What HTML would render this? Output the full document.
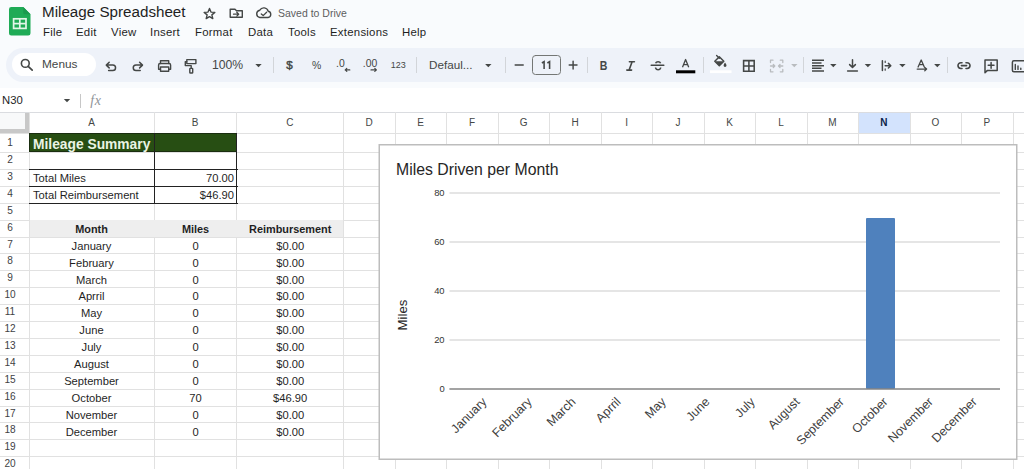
<!DOCTYPE html>
<html><head><meta charset="utf-8">
<style>
*{box-sizing:border-box;margin:0;padding:0}
html,body{width:1024px;height:469px;overflow:hidden;background:#fff;font-family:"Liberation Sans",sans-serif;position:relative}
.a{position:absolute;white-space:nowrap}
#top{position:absolute;left:0;top:0;width:1024px;height:88px;background:#f9fbfd}
.menu{font-size:11.4px;color:#1f1f1f;top:25px;line-height:14px;letter-spacing:0.25px}
.tb{position:absolute;left:6px;top:47.6px;width:1040px;height:34.4px;background:#eef2f9;border-radius:17px}
.sep{position:absolute;top:57px;width:1px;height:16px;background:#d2d5d9}
.ic{position:absolute}
.hl{position:absolute;height:1px;background:#e1e1e1}
.vl{position:absolute;width:1px;background:#e1e1e1}
.ch{position:absolute;top:113px;height:20px;font-size:10px;color:#444746;text-align:center;line-height:20px}
.rh{position:absolute;left:0;width:20px;font-size:10.1px;color:#3f4245;text-align:center;line-height:17px;height:17px}
.c{position:absolute;font-size:11.2px;color:#1f1f1f;line-height:17px;height:17px;white-space:nowrap}
</style></head><body>
<div id="top"></div>
<!-- logo -->
<svg class="ic" style="left:8.5px;top:6.8px" width="22" height="29" viewBox="0 0 22 29">
<path d="M2.3 0 H14.3 L21.5 7.2 V26.2 a2.3 2.3 0 0 1 -2.3 2.3 H2.3 a2.3 2.3 0 0 1 -2.3 -2.3 V2.3 a2.3 2.3 0 0 1 2.3 -2.3z" fill="#1fab56"/>
<path d="M14.3 0 L21.5 7.2 H15.8 a1.5 1.5 0 0 1 -1.5 -1.5z" fill="#1a9a4e"/>
<rect x="4.6" y="11.8" width="12.4" height="9.6" fill="none" stroke="#e3f6e8" stroke-width="1.7"/>
<line x1="4.6" y1="16.6" x2="17" y2="16.6" stroke="#e3f6e8" stroke-width="1.7"/>
<line x1="10.8" y1="11.8" x2="10.8" y2="21.4" stroke="#e3f6e8" stroke-width="1.7"/>
</svg>
<div class="a" style="left:42px;top:2px;font-size:15.2px;color:#1f1f1f;line-height:20px">Mileage Spreadsheet</div>
<div class="a menu" style="left:43px">File</div>
<div class="a menu" style="left:76px">Edit</div>
<div class="a menu" style="left:111px">View</div>
<div class="a menu" style="left:150px">Insert</div>
<div class="a menu" style="left:195px">Format</div>
<div class="a menu" style="left:248px">Data</div>
<div class="a menu" style="left:288px">Tools</div>
<div class="a menu" style="left:330px">Extensions</div>
<div class="a menu" style="left:402px">Help</div>
<div class="a" style="left:278px;top:6px;font-size:10.5px;color:#5e5e5e;line-height:14px">Saved to Drive</div>

<div class="tb"></div>
<div class="a" style="left:12px;top:53px;width:84px;height:23px;background:#fff;border-radius:12px"></div>
<div class="a" style="left:42px;top:57px;font-size:11.8px;color:#444746;line-height:14px">Menus</div>
<div class="a" style="left:212px;top:58px;font-size:12.2px;color:#444746;line-height:14px">100%</div>
<div class="a" style="left:429px;top:58px;font-size:11.7px;color:#444746;line-height:14px">Defaul...</div>
<div class="sep" style="left:273px"></div>
<div class="sep" style="left:416px"></div>
<div class="sep" style="left:505px"></div>
<div class="sep" style="left:587px"></div>
<div class="sep" style="left:703px"></div>
<div class="sep" style="left:803px"></div>
<div class="sep" style="left:947px"></div>

<!-- formula bar -->
<div class="a" style="left:2px;top:93px;font-size:11.3px;color:#1f1f1f;line-height:14px">N30</div>
<div class="a" style="left:80px;top:94px;width:1px;height:14px;background:#c7c7c7"></div>
<div class="hl" style="left:0;top:112px;width:1024px;background:#dadce0"></div>

<!--ICONS-->
<svg class="ic" style="left:0;top:0" width="1024" height="112" viewBox="0 0 1024 112" fill="none" stroke="#444746" stroke-width="1.5" stroke-linecap="round" stroke-linejoin="round" font-family="Liberation Sans, sans-serif">
<polygon points="209.50,8.50 210.97,12.08 214.83,12.37 211.88,14.87 212.79,18.63 209.50,16.60 206.21,18.63 207.12,14.87 204.17,12.37 208.03,12.08" stroke="#444746" stroke-width="1.4"/>
<path d="M230.2 9.3 H235 L236.5 10.8 H242.3 V17.3 H230.2 Z" stroke-width="1.4"/>
<path d="M233.5 14.2 H238.5 M236.8 12.3 L238.7 14.2 L236.8 16.1" stroke-width="1.3"/>
<path d="M259.8 17.5 H268 A3.2 3.2 0 0 0 268.2 11.2 A4.6 4.6 0 0 0 259.8 10.2 A3.7 3.7 0 0 0 259.8 17.5 Z" stroke-width="1.4"/>
<path d="M261.3 13.9 L263.2 15.6 L266.6 12.2" stroke-width="1.3"/>
<circle cx="25.3" cy="63.4" r="3.9" stroke-width="1.6"/><path d="M28.2 66.3 L32.2 70.2" stroke-width="1.7"/>
<path d="M109.2 62.3 L106.3 65.1 L109.2 67.9 M106.6 65.1 H112.8 A2.75 2.75 0 0 1 112.8 70.6 H108.6" stroke-width="1.5"/>
<path d="M139.6 62.3 L142.5 65.1 L139.6 67.9 M142.2 65.1 H136 A2.75 2.75 0 0 0 136 70.6 H140.2" stroke-width="1.5"/>
<path d="M160.5 63.5 V60.8 H168.7 V63.5" stroke-width="1.4"/>
<path d="M160.5 69.3 H158.6 V65 A1.5 1.5 0 0 1 160.1 63.5 H169.1 A1.5 1.5 0 0 1 170.6 65 V69.3 H168.7" stroke-width="1.4"/>
<path d="M160.5 67 H168.7 V71.3 H160.5 Z" stroke-width="1.4"/>
<path d="M186.8 59.6 H195.9 V63.6 H186.8 Z" stroke-width="1.4"/>
<path d="M186.8 61.6 H185.3 V65.6 H191.2 V68.3" stroke-width="1.4"/>
<rect x="189.8" y="68.4" width="2.9" height="4.6" rx="0.6" stroke-width="1.4"/>
<path d="M255.3 64 H261.7 L258.5 67.2 Z" fill="#444746" stroke="none"/>
<path d="M485.1 64 H491.5 L488.3 67.2 Z" fill="#444746" stroke="none"/>
<path d="M791.0999999999999 64 H797.5 L794.3 67.2 Z" fill="#b9bcbf" stroke="none"/>
<path d="M830.0999999999999 64 H836.5 L833.3 67.2 Z" fill="#444746" stroke="none"/>
<path d="M864.6999999999999 64 H871.1 L867.9 67.2 Z" fill="#444746" stroke="none"/>
<path d="M899.1999999999999 64 H905.6 L902.4 67.2 Z" fill="#444746" stroke="none"/>
<path d="M934.0999999999999 64 H940.5 L937.3 67.2 Z" fill="#444746" stroke="none"/>
<text x="289.6" y="69.2" font-size="11.6" text-anchor="middle" fill="#444746" stroke="#444746" stroke-width="0.45">$</text>
<text x="316.7" y="68.6" font-size="10.4" text-anchor="middle" fill="#444746" stroke="none">%</text>
<text x="336" y="67.3" font-size="10.4" fill="#444746" stroke="none">.0</text>
<path d="M349.8 69.9 H345.2 M346.8 68.4 L345.2 69.9 L346.8 71.4" stroke-width="1.2"/>
<text x="362.8" y="67.3" font-size="10.4" fill="#444746" stroke="none">.00</text>
<path d="M371 69.9 H376.4 M374.8 68.4 L376.4 69.9 L374.8 71.4" stroke-width="1.2"/>
<text x="398.3" y="68.1" font-size="9" text-anchor="middle" fill="#444746" stroke="none">123</text>
<path d="M515.2 64.9 H523.2" stroke-width="1.45"/>
<rect x="532.5" y="55.5" width="28" height="19" rx="3" stroke="#747775" stroke-width="1"/>
<path d="M541.9 63 L544.1 61.6 V69 M547.4 63 L549.6 61.6 V69" stroke-width="1.55" stroke-linecap="butt" stroke-linejoin="miter"/>
<path d="M569.2 65 H577 M573.1 61.1 V68.9" stroke-width="1.45"/>
<text transform="translate(603.6 69.9) scale(0.82 1)" font-size="12.9" font-weight="bold" text-anchor="middle" fill="#444746" stroke="none">B</text>
<path d="M629.4 61.7 H634.4 M626.8 70.1 H631.6 M632.1 61.7 L629.1 70.1" stroke-width="1.6"/>
<path d="M651.2 65.2 H663.8" stroke-width="1.5"/>
<path d="M655.6 63.3 A2.6 2.1 0 0 1 660.6 63.3 M655.6 67.6 V68 A2.6 2.5 0 0 0 660.6 68 V67.6" stroke-width="1.5" stroke-linecap="butt"/>
<path d="M682.5 67.3 L685.6 59.5 L688.7 67.3 M683.6 64.6 H687.6" stroke-width="1.3" stroke-linecap="butt"/>
<rect x="676" y="70.3" width="19.3" height="3" fill="#000" stroke="none"/>
<path d="M714.8 61.3 L719.3 56.8 L723.8 61.3 L719.3 65.8 Z" fill="none" stroke-width="1.5"/>
<path d="M714.8 61.3 H723.8 L719.3 65.8 Z" fill="#444746" stroke="none"/>
<path d="M716.6 55.6 L719.3 58.3" stroke-width="1.4"/>
<path d="M725 62.6 Q723.5 64.8 723.6 65.6 A1.45 1.45 0 0 0 726.5 65.6 Q726.6 64.8 725 62.6 Z" fill="#444746" stroke="none"/>
<rect x="710" y="70.3" width="21.5" height="2.8" fill="#fff" stroke="none"/>
<path d="M743.6 60.6 H754.2 V71.2 H743.6 Z M748.9 60.6 V71.2 M743.6 65.9 H754.2" stroke-width="1.55" stroke-linecap="butt" stroke-linejoin="miter"/>
<path d="M770.5 62.5 V60.2 H773 M770.5 69.5 V71.8 H773 M782.8 62.5 V60.2 H780.3 M782.8 69.5 V71.8 H780.3 M770.5 66 H774.8 M773.3 64.5 L774.8 66 L773.3 67.5 M782.8 66 H778.5 M780 64.5 L778.5 66 L780 67.5" stroke="#b9bcbf" stroke-width="1.3"/>
<path d="M812 60.3 H824 M812 63 H821.5 M812 65.7 H824 M812 68.3 H821.5 M812 71 H824" stroke-width="1.4" stroke-linecap="butt"/>
<path d="M847.6 70.9 H857.4 M852.5 59.8 V67.2 M849.6 64.6 L852.5 67.5 L855.4 64.6" stroke-width="1.5"/>
<path d="M882.4 60.8 V70.6 M885.2 65.7 H890.6 M888.4 63.4 L890.8 65.7 L888.4 68" stroke-width="1.5"/>
<path d="M885.2 61.2 V62.5 M885.2 68.9 V70.2" stroke-width="1.2"/>
<path d="M918.1 67 L921.2 60 L924.3 67 M919.1 64.7 H923.3 M917.2 69.1 H926.5 M924.8 67.5 L926.6 69.1 L924.8 70.7" stroke-width="1.3"/>
<path d="M962 62.7 H960.9 A2.9 2.9 0 0 0 960.9 68.5 H962 M966 62.7 H967.1 A2.9 2.9 0 0 1 967.1 68.5 H966 M961.4 65.6 H966.6" stroke-width="1.6"/>
<path d="M985 60 H997.2 V70.6 H987.2 L985 72.8 Z" stroke-width="1.5"/>
<path d="M991.1 62.4 V68.2 M988.2 65.3 H994" stroke-width="1.5"/>
<rect x="1012.4" y="60.8" width="13" height="11" rx="1.5" stroke-width="1.5"/>
<path d="M1015.3 64.5 V69.4 M1018 66 V69.4 M1020.8 68.3 V69.4" stroke-width="1.4"/>
<text x="90.2" y="105" font-size="14" letter-spacing="0.6" font-family="Liberation Serif, serif" font-style="italic" fill="#8f9398" stroke="none">fx</text>
<path d="M63.8 99 H70.2 L67 102.2 Z" fill="#444746" stroke="none"/>
</svg>
<!--/ICONS-->
<!--GRID-->
<div class="hl" style="left:0;top:133px;width:1024px;background:#e1e1e1"></div>
<div class="a" style="left:859.20px;top:113px;width:50.48px;height:20px;background:#d3e3fd"></div>
<div class="ch" style="left:29.00px;width:125.00px;">A</div>
<div class="ch" style="left:154.00px;width:82.30px;">B</div>
<div class="ch" style="left:236.30px;width:107.10px;">C</div>
<div class="ch" style="left:343.40px;width:51.48px;">D</div>
<div class="ch" style="left:394.88px;width:51.48px;">E</div>
<div class="ch" style="left:446.36px;width:51.48px;">F</div>
<div class="ch" style="left:497.84px;width:51.48px;">G</div>
<div class="ch" style="left:549.32px;width:51.48px;">H</div>
<div class="ch" style="left:600.80px;width:51.48px;">I</div>
<div class="ch" style="left:652.28px;width:51.48px;">J</div>
<div class="ch" style="left:703.76px;width:51.48px;">K</div>
<div class="ch" style="left:755.24px;width:51.48px;">L</div>
<div class="ch" style="left:806.72px;width:51.48px;">M</div>
<div class="ch" style="left:858.20px;width:51.48px;font-weight:bold;color:#0b1f4a">N</div>
<div class="ch" style="left:909.68px;width:51.48px;">O</div>
<div class="ch" style="left:961.16px;width:51.48px;">P</div>
<div class="ch" style="left:1012.64px;width:51.48px;">Q</div>
<div class="vl" style="left:29.00px;top:112px;height:360px;background:#e1e1e1"></div>
<div class="vl" style="left:154.00px;top:112px;height:360px;background:#e1e1e1"></div>
<div class="vl" style="left:236.30px;top:112px;height:360px;background:#e1e1e1"></div>
<div class="vl" style="left:343.40px;top:112px;height:360px;background:#e1e1e1"></div>
<div class="vl" style="left:394.88px;top:112px;height:360px;background:#e1e1e1"></div>
<div class="vl" style="left:446.36px;top:112px;height:360px;background:#e1e1e1"></div>
<div class="vl" style="left:497.84px;top:112px;height:360px;background:#e1e1e1"></div>
<div class="vl" style="left:549.32px;top:112px;height:360px;background:#e1e1e1"></div>
<div class="vl" style="left:600.80px;top:112px;height:360px;background:#e1e1e1"></div>
<div class="vl" style="left:652.28px;top:112px;height:360px;background:#e1e1e1"></div>
<div class="vl" style="left:703.76px;top:112px;height:360px;background:#e1e1e1"></div>
<div class="vl" style="left:755.24px;top:112px;height:360px;background:#e1e1e1"></div>
<div class="vl" style="left:806.72px;top:112px;height:360px;background:#e1e1e1"></div>
<div class="vl" style="left:858.20px;top:112px;height:360px;background:#e1e1e1"></div>
<div class="vl" style="left:909.68px;top:112px;height:360px;background:#e1e1e1"></div>
<div class="vl" style="left:961.16px;top:112px;height:360px;background:#e1e1e1"></div>
<div class="vl" style="left:1012.64px;top:112px;height:360px;background:#e1e1e1"></div>
<div class="vl" style="left:1064.12px;top:112px;height:360px;background:#e1e1e1"></div>
<div class="hl" style="left:0;top:152.00px;width:1024px;background:#e1e1e1"></div>
<div class="rh" style="top:133.00px;height:19.00px;line-height:19.00px">1</div>
<div class="hl" style="left:0;top:168.90px;width:1024px;background:#e1e1e1"></div>
<div class="rh" style="top:152.00px;height:16.90px;line-height:16.90px">2</div>
<div class="hl" style="left:0;top:185.80px;width:1024px;background:#e1e1e1"></div>
<div class="rh" style="top:168.90px;height:16.90px;line-height:16.90px">3</div>
<div class="hl" style="left:0;top:202.70px;width:1024px;background:#e1e1e1"></div>
<div class="rh" style="top:185.80px;height:16.90px;line-height:16.90px">4</div>
<div class="hl" style="left:0;top:219.60px;width:1024px;background:#e1e1e1"></div>
<div class="rh" style="top:202.70px;height:16.90px;line-height:16.90px">5</div>
<div class="hl" style="left:0;top:236.50px;width:1024px;background:#e1e1e1"></div>
<div class="rh" style="top:219.60px;height:16.90px;line-height:16.90px">6</div>
<div class="hl" style="left:0;top:253.40px;width:1024px;background:#e1e1e1"></div>
<div class="rh" style="top:236.50px;height:16.90px;line-height:16.90px">7</div>
<div class="hl" style="left:0;top:270.30px;width:1024px;background:#e1e1e1"></div>
<div class="rh" style="top:253.40px;height:16.90px;line-height:16.90px">8</div>
<div class="hl" style="left:0;top:287.20px;width:1024px;background:#e1e1e1"></div>
<div class="rh" style="top:270.30px;height:16.90px;line-height:16.90px">9</div>
<div class="hl" style="left:0;top:304.10px;width:1024px;background:#e1e1e1"></div>
<div class="rh" style="top:287.20px;height:16.90px;line-height:16.90px">10</div>
<div class="hl" style="left:0;top:321.00px;width:1024px;background:#e1e1e1"></div>
<div class="rh" style="top:304.10px;height:16.90px;line-height:16.90px">11</div>
<div class="hl" style="left:0;top:337.90px;width:1024px;background:#e1e1e1"></div>
<div class="rh" style="top:321.00px;height:16.90px;line-height:16.90px">12</div>
<div class="hl" style="left:0;top:354.80px;width:1024px;background:#e1e1e1"></div>
<div class="rh" style="top:337.90px;height:16.90px;line-height:16.90px">13</div>
<div class="hl" style="left:0;top:371.70px;width:1024px;background:#e1e1e1"></div>
<div class="rh" style="top:354.80px;height:16.90px;line-height:16.90px">14</div>
<div class="hl" style="left:0;top:388.60px;width:1024px;background:#e1e1e1"></div>
<div class="rh" style="top:371.70px;height:16.90px;line-height:16.90px">15</div>
<div class="hl" style="left:0;top:405.50px;width:1024px;background:#e1e1e1"></div>
<div class="rh" style="top:388.60px;height:16.90px;line-height:16.90px">16</div>
<div class="hl" style="left:0;top:422.40px;width:1024px;background:#e1e1e1"></div>
<div class="rh" style="top:405.50px;height:16.90px;line-height:16.90px">17</div>
<div class="hl" style="left:0;top:439.30px;width:1024px;background:#e1e1e1"></div>
<div class="rh" style="top:422.40px;height:16.90px;line-height:16.90px">18</div>
<div class="hl" style="left:0;top:456.20px;width:1024px;background:#e1e1e1"></div>
<div class="rh" style="top:439.30px;height:16.90px;line-height:16.90px">19</div>
<div class="hl" style="left:0;top:473.10px;width:1024px;background:#e1e1e1"></div>
<div class="rh" style="top:456.20px;height:16.90px;line-height:16.90px">20</div>
<div class="a" style="left:0;top:113px;width:25px;height:16px;background:#f8f9fa"></div>
<div class="a" style="left:25px;top:113px;width:4px;height:20px;background:#c8c8c8"></div>
<div class="a" style="left:0;top:129px;width:29px;height:4px;background:#c8c8c8"></div>
<div class="a" style="left:29px;top:133px;width:208px;height:19px;background:#274e13;border:1px solid #1a2e10"></div>
<div class="c" style="left:33px;top:135px;height:19px;line-height:19px;font-size:13.8px;font-weight:bold;color:#eaf4e4">Mileage Summary</div>
<div class="a" style="left:29px;top:168.90px;width:209px;height:1px;background:#222"></div>
<div class="a" style="left:29px;top:185.80px;width:209px;height:1px;background:#222"></div>
<div class="a" style="left:29px;top:202.70px;width:209px;height:1px;background:#222"></div>
<div class="a" style="left:154px;top:133px;width:1px;height:69.70px;background:#222"></div>
<div class="a" style="left:236px;top:133px;width:1px;height:69.70px;background:#222"></div>
<div class="c" style="left:33px;top:168.12px;height:20px;line-height:20px;font-size:11.2px;">Total Miles</div>
<div class="c" style="left:154px;width:80px;text-align:right;top:168.12px;height:20px;line-height:20px;font-size:11.2px;">70.00</div>
<div class="c" style="left:33px;top:185.02px;height:20px;line-height:20px;font-size:11.2px;">Total Reimbursement</div>
<div class="c" style="left:154px;width:80px;text-align:right;top:185.02px;height:20px;line-height:20px;font-size:11.2px;">$46.90</div>
<div class="a" style="left:30px;top:219.60px;width:313px;height:17.50px;background:#eeeeee"></div>
<div class="c" style="left:29px;width:125px;text-align:center;top:218.92px;height:20px;line-height:20px;font-size:10.9px;font-weight:bold">Month</div>
<div class="c" style="left:154px;width:83px;text-align:center;top:218.92px;height:20px;line-height:20px;font-size:10.9px;font-weight:bold">Miles</div>
<div class="c" style="left:237px;width:106.39999999999998px;text-align:center;top:218.92px;height:20px;line-height:20px;font-size:10.9px;font-weight:bold">Reimbursement</div>
<div class="c" style="left:29px;width:125px;text-align:center;top:235.72px;height:20px;line-height:20px;font-size:11.2px;">January</div>
<div class="c" style="left:154px;width:83px;text-align:center;top:235.72px;height:20px;line-height:20px;font-size:11.2px;">0</div>
<div class="c" style="left:237px;width:106.39999999999998px;text-align:center;top:235.72px;height:20px;line-height:20px;font-size:11.2px;">$0.00</div>
<div class="c" style="left:29px;width:125px;text-align:center;top:252.62px;height:20px;line-height:20px;font-size:11.2px;">February</div>
<div class="c" style="left:154px;width:83px;text-align:center;top:252.62px;height:20px;line-height:20px;font-size:11.2px;">0</div>
<div class="c" style="left:237px;width:106.39999999999998px;text-align:center;top:252.62px;height:20px;line-height:20px;font-size:11.2px;">$0.00</div>
<div class="c" style="left:29px;width:125px;text-align:center;top:269.52px;height:20px;line-height:20px;font-size:11.2px;">March</div>
<div class="c" style="left:154px;width:83px;text-align:center;top:269.52px;height:20px;line-height:20px;font-size:11.2px;">0</div>
<div class="c" style="left:237px;width:106.39999999999998px;text-align:center;top:269.52px;height:20px;line-height:20px;font-size:11.2px;">$0.00</div>
<div class="c" style="left:29px;width:125px;text-align:center;top:286.42px;height:20px;line-height:20px;font-size:11.2px;">Aprril</div>
<div class="c" style="left:154px;width:83px;text-align:center;top:286.42px;height:20px;line-height:20px;font-size:11.2px;">0</div>
<div class="c" style="left:237px;width:106.39999999999998px;text-align:center;top:286.42px;height:20px;line-height:20px;font-size:11.2px;">$0.00</div>
<div class="c" style="left:29px;width:125px;text-align:center;top:303.32px;height:20px;line-height:20px;font-size:11.2px;">May</div>
<div class="c" style="left:154px;width:83px;text-align:center;top:303.32px;height:20px;line-height:20px;font-size:11.2px;">0</div>
<div class="c" style="left:237px;width:106.39999999999998px;text-align:center;top:303.32px;height:20px;line-height:20px;font-size:11.2px;">$0.00</div>
<div class="c" style="left:29px;width:125px;text-align:center;top:320.22px;height:20px;line-height:20px;font-size:11.2px;">June</div>
<div class="c" style="left:154px;width:83px;text-align:center;top:320.22px;height:20px;line-height:20px;font-size:11.2px;">0</div>
<div class="c" style="left:237px;width:106.39999999999998px;text-align:center;top:320.22px;height:20px;line-height:20px;font-size:11.2px;">$0.00</div>
<div class="c" style="left:29px;width:125px;text-align:center;top:337.12px;height:20px;line-height:20px;font-size:11.2px;">July</div>
<div class="c" style="left:154px;width:83px;text-align:center;top:337.12px;height:20px;line-height:20px;font-size:11.2px;">0</div>
<div class="c" style="left:237px;width:106.39999999999998px;text-align:center;top:337.12px;height:20px;line-height:20px;font-size:11.2px;">$0.00</div>
<div class="c" style="left:29px;width:125px;text-align:center;top:354.02px;height:20px;line-height:20px;font-size:11.2px;">August</div>
<div class="c" style="left:154px;width:83px;text-align:center;top:354.02px;height:20px;line-height:20px;font-size:11.2px;">0</div>
<div class="c" style="left:237px;width:106.39999999999998px;text-align:center;top:354.02px;height:20px;line-height:20px;font-size:11.2px;">$0.00</div>
<div class="c" style="left:29px;width:125px;text-align:center;top:370.92px;height:20px;line-height:20px;font-size:11.2px;">September</div>
<div class="c" style="left:154px;width:83px;text-align:center;top:370.92px;height:20px;line-height:20px;font-size:11.2px;">0</div>
<div class="c" style="left:237px;width:106.39999999999998px;text-align:center;top:370.92px;height:20px;line-height:20px;font-size:11.2px;">$0.00</div>
<div class="c" style="left:29px;width:125px;text-align:center;top:387.82px;height:20px;line-height:20px;font-size:11.2px;">October</div>
<div class="c" style="left:154px;width:83px;text-align:center;top:387.82px;height:20px;line-height:20px;font-size:11.2px;">70</div>
<div class="c" style="left:237px;width:106.39999999999998px;text-align:center;top:387.82px;height:20px;line-height:20px;font-size:11.2px;">$46.90</div>
<div class="c" style="left:29px;width:125px;text-align:center;top:404.72px;height:20px;line-height:20px;font-size:11.2px;">November</div>
<div class="c" style="left:154px;width:83px;text-align:center;top:404.72px;height:20px;line-height:20px;font-size:11.2px;">0</div>
<div class="c" style="left:237px;width:106.39999999999998px;text-align:center;top:404.72px;height:20px;line-height:20px;font-size:11.2px;">$0.00</div>
<div class="c" style="left:29px;width:125px;text-align:center;top:421.62px;height:20px;line-height:20px;font-size:11.2px;">December</div>
<div class="c" style="left:154px;width:83px;text-align:center;top:421.62px;height:20px;line-height:20px;font-size:11.2px;">0</div>
<div class="c" style="left:237px;width:106.39999999999998px;text-align:center;top:421.62px;height:20px;line-height:20px;font-size:11.2px;">$0.00</div>
<!--/GRID-->
<!--CHART-->
<svg class="ic" style="left:0;top:0" width="1024" height="469" viewBox="0 0 1024 469" font-family="Liberation Sans, sans-serif">
<rect x="379.25" y="144.75" width="637.5" height="314.5" fill="#fff" stroke="#bdbdbd" stroke-width="1.5"/>
<text x="396" y="174.6" font-size="15.8" fill="#262626">Miles Driven per Month</text>
<line x1="449.5" y1="193" x2="1000" y2="193" stroke="#dcdcdc" stroke-width="1.3"/>
<line x1="449.5" y1="242" x2="1000" y2="242" stroke="#dcdcdc" stroke-width="1.3"/>
<line x1="449.5" y1="291" x2="1000" y2="291" stroke="#dcdcdc" stroke-width="1.3"/>
<line x1="449.5" y1="340" x2="1000" y2="340" stroke="#dcdcdc" stroke-width="1.3"/>
<text x="444.6" y="196.4" font-size="9.4" text-anchor="end" fill="#333">80</text>
<text x="444.6" y="245.4" font-size="9.4" text-anchor="end" fill="#333">60</text>
<text x="444.6" y="294.4" font-size="9.4" text-anchor="end" fill="#333">40</text>
<text x="444.6" y="343.4" font-size="9.4" text-anchor="end" fill="#333">20</text>
<text x="444.6" y="392.4" font-size="9.4" text-anchor="end" fill="#333">0</text>
<rect x="866" y="218" width="29" height="171" rx="1" fill="#4f81bd"/>
<line x1="449.4" y1="389" x2="1000" y2="389" stroke="#858585" stroke-width="1.5"/>
<text transform="translate(407,315) rotate(-90)" font-size="13.2" text-anchor="middle" fill="#262626">Miles</text>
<text transform="translate(487.5,402.5) rotate(-45)" font-size="12.5" text-anchor="end" fill="#404040">January</text>
<text transform="translate(532.6,402.5) rotate(-45)" font-size="12.5" text-anchor="end" fill="#404040">February</text>
<text transform="translate(576.4,402.5) rotate(-45)" font-size="12.5" text-anchor="end" fill="#404040">March</text>
<text transform="translate(621.5,402.5) rotate(-45)" font-size="12.5" text-anchor="end" fill="#404040">Aprril</text>
<text transform="translate(666.6,402.5) rotate(-45)" font-size="12.5" text-anchor="end" fill="#404040">May</text>
<text transform="translate(710.3,402.5) rotate(-45)" font-size="12.5" text-anchor="end" fill="#404040">June</text>
<text transform="translate(755.7,402.5) rotate(-45)" font-size="12.5" text-anchor="end" fill="#404040">July</text>
<text transform="translate(800.4,402.5) rotate(-45)" font-size="12.5" text-anchor="end" fill="#404040">August</text>
<text transform="translate(844.8,402.5) rotate(-45)" font-size="12.5" text-anchor="end" fill="#404040">September</text>
<text transform="translate(888.5,402.5) rotate(-45)" font-size="12.5" text-anchor="end" fill="#404040">October</text>
<text transform="translate(933.8,402.5) rotate(-45)" font-size="12.5" text-anchor="end" fill="#404040">November</text>
<text transform="translate(977.6,402.5) rotate(-45)" font-size="12.5" text-anchor="end" fill="#404040">December</text>
</svg>
<!--/CHART-->
</body></html>
